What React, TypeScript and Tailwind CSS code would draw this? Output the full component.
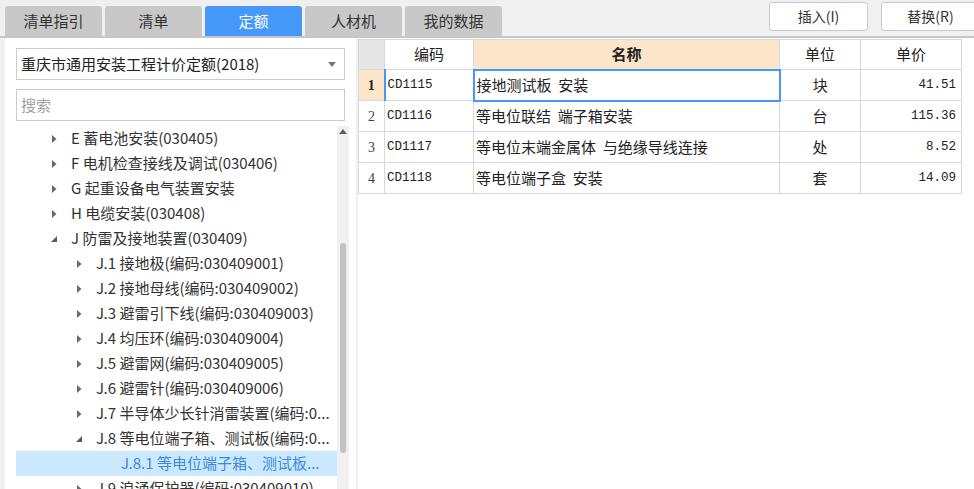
import React from 'react';

const CJK = "font-['Noto_Sans_CJK_SC','Noto_Sans',sans-serif]";
const MONO = "font-['Liberation_Mono','Noto_Sans_CJK_SC',monospace]";

type Node = { label: string; level: number; state: 'closed' | 'open' | 'leaf'; selected?: boolean };

const tree: Node[] = [
  { label: 'E 蓄电池安装(030405)', level: 1, state: 'closed' },
  { label: 'F 电机检查接线及调试(030406)', level: 1, state: 'closed' },
  { label: 'G 起重设备电气装置安装', level: 1, state: 'closed' },
  { label: 'H 电缆安装(030408)', level: 1, state: 'closed' },
  { label: 'J 防雷及接地装置(030409)', level: 1, state: 'open' },
  { label: 'J.1 接地极(编码:030409001)', level: 2, state: 'closed' },
  { label: 'J.2 接地母线(编码:030409002)', level: 2, state: 'closed' },
  { label: 'J.3 避雷引下线(编码:030409003)', level: 2, state: 'closed' },
  { label: 'J.4 均压环(编码:030409004)', level: 2, state: 'closed' },
  { label: 'J.5 避雷网(编码:030409005)', level: 2, state: 'closed' },
  { label: 'J.6 避雷针(编码:030409006)', level: 2, state: 'closed' },
  { label: 'J.7 半导体少长针消雷装置(编码:0...', level: 2, state: 'closed' },
  { label: 'J.8 等电位端子箱、测试板(编码:0...', level: 2, state: 'open' },
  { label: 'J.8.1 等电位端子箱、测试板...', level: 3, state: 'leaf', selected: true },
  { label: 'J.9 浪涌保护器(编码:030409010)', level: 2, state: 'closed' },
];

const rows = [
  { no: '1', code: 'CD1115', name: '接地测试板  安装', unit: '块', price: '41.51' },
  { no: '2', code: 'CD1116', name: '等电位联结  端子箱安装', unit: '台', price: '115.36' },
  { no: '3', code: 'CD1117', name: '等电位末端金属体  与绝缘导线连接', unit: '处', price: '8.52' },
  { no: '4', code: 'CD1118', name: '等电位端子盒  安装', unit: '套', price: '14.09' },
];

const tabs = ['清单指引', '清单', '定额', '人材机', '我的数据'];

function Arrow({ state }: { state: Node['state'] }) {
  if (state === 'leaf') return <span className="w-[8px]" />;
  if (state === 'open')
    return (
      <svg width="8" height="8" viewBox="0 0 8 8" className="shrink-0">
        <path d="M7 1 L7 7 L1 7 Z" fill="#5a5a5a" />
      </svg>
    );
  return (
    <svg width="8" height="10" viewBox="0 0 8 10" className="shrink-0">
      <path d="M2 1 L6.5 5 L2 9 Z" fill="#6a6a6a" />
    </svg>
  );
}

const App: React.FC = () => {
  return (
    <div className={`w-[974px] h-[489px] overflow-hidden bg-[#f0f0f0] flex flex-col ${CJK}`}>
      {/* top bar */}
      <div className="h-[36px] flex items-start shrink-0">
        <div className="flex gap-[3px] pl-[5px] pt-[6px]">
          {tabs.map((t) => (
            <div
              key={t}
              className={`w-[97px] h-[30px] rounded-t-[3px] flex items-center justify-center text-[15px] ${
                t === '定额' ? 'bg-[#4599fa] text-white' : 'bg-[#c8c8c8] text-[#333]'
              }`}
            >
              {t}
            </div>
          ))}
        </div>
        <div className="ml-auto flex gap-[13px] pt-[2px] -mr-[6px]">
          <button className="w-[99px] h-[29px] bg-white border border-[#c8c8c8] rounded-[3px] text-[14px] text-[#333]">插入(I)</button>
          <button className="w-[99px] h-[29px] bg-white border border-[#c8c8c8] rounded-[3px] text-[14px] text-[#333]">替换(R)</button>
        </div>
      </div>
      <div className="h-[2px] bg-[#c6c6c6] shrink-0" />

      {/* body */}
      <div className="flex flex-1 min-h-0">
        {/* left panel */}
        <div className="ml-[5px] w-[351px] bg-white flex flex-col">
          <div className="px-[11px] pt-[10px]">
            <div className="h-[32px] border border-[#cbcbcb] flex items-center pl-[4px] pr-[8px] text-[15px] text-[#222]">
              <span className="flex-1">重庆市通用安装工程计价定额(2018)</span>
              <svg width="8" height="5" viewBox="0 0 8 5">
                <path d="M0 0 L8 0 L4 5 Z" fill="#777" />
              </svg>
            </div>
            <div className="h-[32px] mt-[9px] border border-[#cbcbcb] flex items-center pl-[4px] text-[15px] text-[#a0a0a0]">
              搜索
            </div>
          </div>
          <div className="flex flex-1 mt-[5px] pl-[11px] min-h-0">
            <div className="w-[321px] flex flex-col overflow-hidden">
              {tree.map((n) => (
                <div
                  key={n.label}
                  className={`h-[25px] shrink-0 flex items-center whitespace-nowrap text-[15px] ${
                    n.selected ? 'bg-[#cce8ff] text-[#3a8ae0]' : 'text-[#333]'
                  }`}
                  style={{ paddingLeft: 34 + (n.level - 1) * 25 }}
                >
                  <Arrow state={n.state} />
                  <span className="ml-[13px]">{n.label}</span>
                </div>
              ))}
            </div>
            {/* scrollbar */}
            <div className="w-[12px] bg-[#f0f0f0] flex flex-col items-center relative">
              <svg width="8" height="5" viewBox="0 0 8 5" className="mt-[3px]">
                <path d="M0 5 L8 5 L4 0 Z" fill="#606060" />
              </svg>
              <div className="absolute top-[117px] left-[3px] w-[6px] h-[210px] rounded-[3px] bg-[#c2c2c2]" />
            </div>
          </div>
        </div>

        {/* right panel */}
        <div className="ml-[2px] flex-1 bg-white pt-[1px]">
          <table className="border-collapse text-[15px] text-[#222] table-fixed">
            <colgroup>
              <col className="w-[26px]" />
              <col className="w-[89px]" />
              <col className="w-[306px]" />
              <col className="w-[81px]" />
              <col className="w-[101px]" />
            </colgroup>
            <thead>
              <tr className="h-[30px]">
                <th className="border border-[#d9d9d9] bg-[#e5e5e5]" />
                <th className="border border-[#d9d9d9] font-normal">编码</th>
                <th className="border border-[#d9d9d9] bg-[#fde5c9] font-bold">名称</th>
                <th className="border border-[#d9d9d9] font-normal">单位</th>
                <th className="border border-[#d9d9d9] font-normal">单价</th>
              </tr>
            </thead>
            <tbody>
              {rows.map((r, i) => (
                <tr key={r.no} className="h-[31px]">
                  <td
                    className={`border border-[#d9d9d9] text-center text-[14px] font-['Liberation_Serif',serif] ${
                      i === 0 ? 'bg-[#fde5c9] font-bold' : 'text-[#444]'
                    }`}
                  >
                    {r.no}
                  </td>
                  <td
                    className={`border border-[#d9d9d9] pl-[2px] text-[12.5px] ${MONO} ${
                      i === 0 ? 'border-l-[#4599fa] border-l-2' : ''
                    }`}
                  >
                    {r.code}
                  </td>
                  <td
                    className={`pl-[2px] whitespace-pre ${
                      i === 0 ? 'border-2 border-[#4599fa]' : 'border border-[#d9d9d9]'
                    }`}
                  >
                    {r.name}
                  </td>
                  <td className="border border-[#d9d9d9] text-center">{r.unit}</td>
                  <td className={`border border-[#d9d9d9] text-right pr-[5px] text-[12.5px] ${MONO}`}>{r.price}</td>
                </tr>
              ))}
            </tbody>
          </table>
        </div>
      </div>
    </div>
  );
};

export default App;
